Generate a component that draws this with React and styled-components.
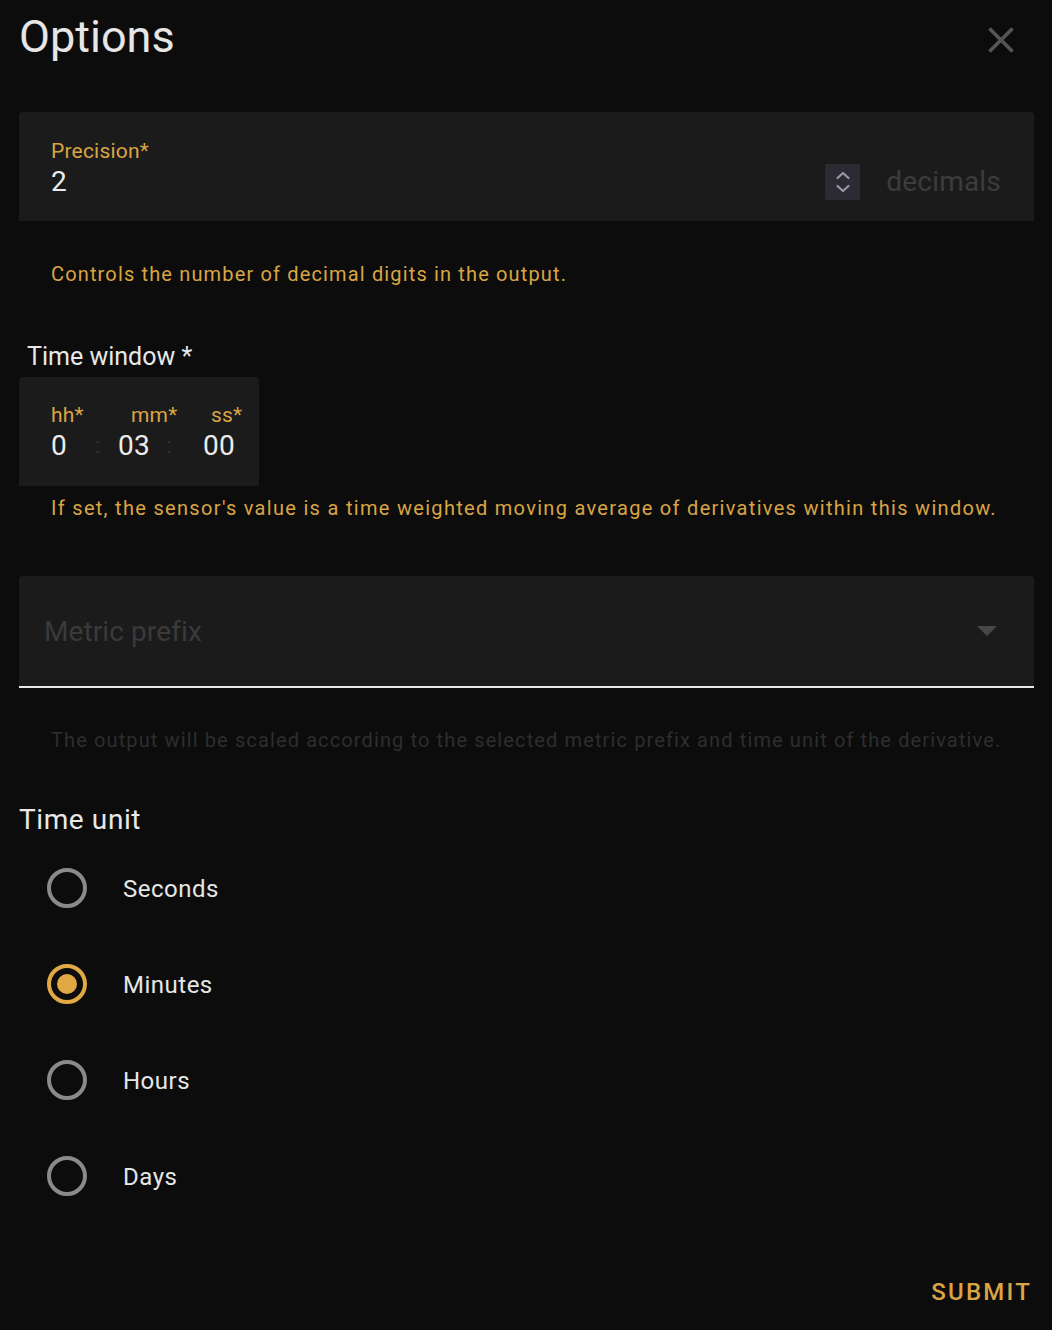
import React from "react";
import styled, { createGlobalStyle } from "styled-components";

const GOLD = "#e0a945";
const GOLD_TEXT = "#d9a544";

const Global = createGlobalStyle`
  html, body {
    margin: 0;
    padding: 0;
    background: #0c0c0c;
  }
  body {
    font-family: Roboto, "Noto Sans", "Liberation Sans", sans-serif;
    color: #e1e1e1;
    -webkit-font-smoothing: antialiased;
  }
  * { box-sizing: border-box; }
`;

const Page = styled.div`
  display: flex;
  flex-direction: column;
  padding: 0 18px 0 19px;
  min-height: 1330px;
  background: #0c0c0c;
`;

const Header = styled.div`
  display: flex;
  justify-content: space-between;
  align-items: flex-start;
  height: 112px;
  padding-top: 10px;
`;

const Title = styled.h1`
  margin: 0;
  font-size: 45px;
  line-height: 54px;
  font-weight: 400;
  color: #e6e6e6;
  letter-spacing: 0;
`;

const CloseButton = styled.button`
  width: 44px;
  height: 44px;
  margin: 8px 11px 0 0;
  padding: 0;
  border: none;
  background: transparent;
  display: flex;
  align-items: center;
  justify-content: center;
  cursor: pointer;
`;

const FilledField = styled.div`
  background: #1b1b1b;
  border-radius: 4px 4px 0 0;
  height: ${(p) => p.$h}px;
`;

const PrecisionField = styled(FilledField)`
  display: flex;
  flex-direction: column;
  padding: 27px 33px 0 32px;
`;

const FloatLabel = styled.div`
  font-size: 21px;
  line-height: 24px;
  color: ${GOLD_TEXT};
  letter-spacing: 0.2px;
  margin-left: ${(p) => p.$offset || 0}px;
  white-space: nowrap;
`;

const ValueRow = styled.div`
  display: flex;
  align-items: center;
  height: 32px;
  margin-top: 3px;
`;

const Value = styled.div`
  font-size: 28px;
  line-height: 32px;
  color: #ececec;
  letter-spacing: 0.3px;
  margin-left: ${(p) => p.$offset || 0}px;
  white-space: nowrap;
`;

const Grow = styled.div`
  flex: 1;
`;

const Spinner = styled.div`
  width: 35px;
  height: 36px;
  background: #2c2b33;
  border-radius: 2px;
  display: flex;
  align-items: center;
  justify-content: center;
`;

const Suffix = styled.div`
  margin-left: 26px;
  font-size: 28px;
  line-height: 32px;
  color: #3c3c3c;
  letter-spacing: 0.2px;
`;

const Helper = styled.div`
  margin-top: ${(p) => p.$mt}px;
  padding-left: 32px;
  font-size: 20px;
  line-height: 24px;
  letter-spacing: ${(p) => p.$ls || 1.15}px;
  color: ${(p) => (p.$dim ? "#2e2e2e" : GOLD_TEXT)};
  white-space: nowrap;
`;

const SectionLabel = styled.div`
  margin-top: ${(p) => p.$mt}px;
  margin-left: ${(p) => p.$ml}px;
  font-size: ${(p) => p.$size}px;
  line-height: ${(p) => p.$lh}px;
  color: #e8e8e8;
  letter-spacing: ${(p) => p.$ls}px;
`;

const TimeBox = styled(FilledField)`
  width: 240px;
  margin-top: 5px;
  padding: 26px 0 0 32px;
  display: flex;
  align-items: flex-start;
`;

const TimePart = styled.div`
  display: flex;
  flex-direction: column;
  width: ${(p) => p.$w}px;
`;

const Colon = styled.div`
  width: ${(p) => p.$w}px;
  padding-top: 27px;
  font-size: 22px;
  line-height: 32px;
  color: #333;
  padding-left: ${(p) => p.$pl}px;
`;

const SelectField = styled(FilledField)`
  margin-top: 56px;
  display: flex;
  align-items: center;
  padding: 0 37px 0 25px;
  border-bottom: 2px solid #e8e8e8;
`;

const SelectLabel = styled.div`
  flex: 1;
  font-size: 28px;
  line-height: 32px;
  color: #3a3a3a;
  letter-spacing: 0.1px;
  padding-top: 2px;
`;

const RadioGroup = styled.div`
  display: flex;
  flex-direction: column;
  margin-top: 4px;
`;

const RadioRow = styled.label`
  display: flex;
  align-items: center;
  height: 96px;
  padding-left: 28px;
  cursor: pointer;
`;

const RadioCircle = styled.span`
  width: 40px;
  height: 40px;
  border-radius: 50%;
  border: 4px solid ${(p) => (p.$checked ? GOLD : "#8a8a8a")};
  display: flex;
  align-items: center;
  justify-content: center;
  flex-shrink: 0;
  &::after {
    content: "";
    width: 20px;
    height: 20px;
    border-radius: 50%;
    background: ${GOLD};
    display: ${(p) => (p.$checked ? "block" : "none")};
  }
`;

const RadioText = styled.span`
  margin-left: 36px;
  font-size: 24px;
  line-height: 28px;
  color: #e6e6e6;
  letter-spacing: 0.5px;
  padding-top: 2px;
`;

const Footer = styled.div`
  display: flex;
  justify-content: flex-end;
  margin-top: 54px;
`;

const SubmitButton = styled.button`
  border: none;
  background: transparent;
  padding: 0;
  margin-right: 2px;
  font-family: Roboto, "Noto Sans", "Liberation Sans", sans-serif;
  font-size: 24px;
  line-height: 28px;
  font-weight: 500;
  letter-spacing: 2.2px;
  color: ${GOLD_TEXT};
  cursor: pointer;
`;

const CloseIcon = () => (
  <svg width="44" height="44" viewBox="0 0 24 24">
    <path
      fill="#555"
      d="M19,6.41L17.59,5L12,10.59L6.41,5L5,6.41L10.59,12L5,17.59L6.41,19L12,13.41L17.59,19L19,17.59L13.41,12L19,6.41Z"
    />
  </svg>
);

const SpinIcon = () => (
  <svg width="20" height="28" viewBox="0 0 20 28" fill="none">
    <path d="M4.5 10 L10 5 L15.5 10" stroke="#9b99a8" strokeWidth="2.2" strokeLinecap="round" strokeLinejoin="round" />
    <path d="M4.5 18 L10 23 L15.5 18" stroke="#9b99a8" strokeWidth="2.2" strokeLinecap="round" strokeLinejoin="round" />
  </svg>
);

const ArrowDown = () => (
  <svg width="20" height="10" viewBox="0 0 20 10">
    <path d="M0 0 L20 0 L10 10 Z" fill="#474747" />
  </svg>
);

const units = [
  { label: "Seconds", checked: false },
  { label: "Minutes", checked: true },
  { label: "Hours", checked: false },
  { label: "Days", checked: false },
];

export default function App() {
  return (
    <>
      <Global />
      <Page>
        <Header>
          <Title>Options</Title>
          <CloseButton aria-label="Close">
            <CloseIcon />
          </CloseButton>
        </Header>

        <PrecisionField $h={109}>
          <FloatLabel>Precision*</FloatLabel>
          <ValueRow>
            <Value>2</Value>
            <Grow />
            <Spinner>
              <SpinIcon />
            </Spinner>
            <Suffix>decimals</Suffix>
          </ValueRow>
        </PrecisionField>

        <Helper $mt={41}>Controls the number of decimal digits in the output.</Helper>

        <SectionLabel $mt={56} $ml={8} $size={25} $lh={30} $ls={0}>
          Time window *
        </SectionLabel>

        <TimeBox $h={109}>
          <TimePart $w={42}>
            <FloatLabel>hh*</FloatLabel>
            <ValueRow>
              <Value>0</Value>
            </ValueRow>
          </TimePart>
          <Colon $w={25} $pl={2}>:</Colon>
          <TimePart $w={48}>
            <FloatLabel $offset={13}>mm*</FloatLabel>
            <ValueRow>
              <Value>03</Value>
            </ValueRow>
          </TimePart>
          <Colon $w={10} $pl={0}>:</Colon>
          <TimePart $w={70}>
            <FloatLabel $offset={35}>ss*</FloatLabel>
            <ValueRow>
              <Value $offset={27}>00</Value>
            </ValueRow>
          </TimePart>
        </TimeBox>

        <Helper $mt={10} $ls={1.3}>
          If set, the sensor's value is a time weighted moving average of derivatives within this window.
        </Helper>

        <SelectField $h={112}>
          <SelectLabel>Metric prefix</SelectLabel>
          <ArrowDown />
        </SelectField>

        <Helper $mt={40} $dim $ls={1.12}>
          The output will be scaled according to the selected metric prefix and time unit of the derivative.
        </Helper>

        <SectionLabel $mt={52} $ml={0} $size={28} $lh={32} $ls={0.6}>
          Time unit
        </SectionLabel>

        <RadioGroup>
          {units.map((u) => (
            <RadioRow key={u.label}>
              <RadioCircle $checked={u.checked} />
              <RadioText>{u.label}</RadioText>
            </RadioRow>
          ))}
        </RadioGroup>

        <Footer>
          <SubmitButton>SUBMIT</SubmitButton>
        </Footer>
      </Page>
    </>
  );
}
